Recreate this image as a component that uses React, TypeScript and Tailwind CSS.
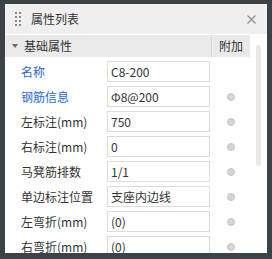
import React from "react";

const rows: { label: string; value: string; blue?: boolean }[] = [
  { label: "名称", value: "C8-200", blue: true },
  { label: "钢筋信息", value: "Φ8@200", blue: true },
  { label: "左标注(mm)", value: "750" },
  { label: "右标注(mm)", value: "0" },
  { label: "马凳筋排数", value: "1/1" },
  { label: "单边标注位置", value: "支座内边线" },
  { label: "左弯折(mm)", value: "(0)" },
  { label: "右弯折(mm)", value: "(0)" },
];

export default function App() {
  return (
    <div
      className="w-[272px] h-[259px] bg-[#3d4148] pt-[4px] px-[5px] pb-[6px] overflow-hidden"
      style={{ fontFamily: '"Noto Sans CJK SC", "Noto Sans", sans-serif' }}
    >
      <div className="relative h-full bg-white flex flex-col overflow-hidden text-[12px] text-[#333]">
        {/* title bar */}
        <div className="h-[30px] shrink-0 bg-[#efefef] flex items-center pl-[10px] pr-[11px]">
          <div className="grid grid-cols-2 gap-x-[2px] gap-y-[2px] w-[6px]">
            {Array.from({ length: 8 }).map((_, i) => (
              <div key={i} className="w-[2px] h-[2px] bg-[#8c8c8c]" />
            ))}
          </div>
          <span className="ml-[10px] leading-none">属性列表</span>
          <div className="flex-1" />
          <svg width="9" height="9" viewBox="0 0 9 9">
            <path d="M0.5 0.5 L8.5 8.5 M8.5 0.5 L0.5 8.5" stroke="#8f8f8f" strokeWidth="1.2" />
          </svg>
        </div>
        <div className="h-[1px] shrink-0 bg-white" />
        {/* group header */}
        <div className="h-[22px] shrink-0 flex">
          <div className="w-[206px] bg-[#eaeaea] flex items-center pl-[7px]">
            <svg width="6" height="4" viewBox="0 0 6 4">
              <path d="M0 0 L6 0 L3 4 Z" fill="#6b6b6b" />
            </svg>
            <span className="ml-[6px] leading-none">基础属性</span>
          </div>
          <div className="w-[39px] bg-[#eaeaea] border-l border-[#d6d6d6] flex items-center justify-center">
            <span className="leading-none">附加</span>
          </div>
          <div className="flex-1" />
        </div>
        {/* rows */}
        <div className="pt-[2px] flex flex-col">
          {rows.map((r) => (
            <div key={r.label} className="h-[25px] flex items-center">
              <div
                className={`w-[102px] pl-[16px] whitespace-nowrap leading-none ${
                  r.blue ? "text-[#1d68d6]" : "text-[#333]"
                }`}
              >
                {r.label}
              </div>
              <div className="w-[103px] h-[21px] border border-[#dcdcdc] flex items-center pl-[3px] leading-none whitespace-nowrap overflow-hidden">
                {r.value}
              </div>
              <div className="w-[41px] flex items-center justify-center">
                {r.label !== "名称" && (
                  <div className="w-[8px] h-[8px] rounded-full bg-[#d6d6d6] border border-[#c4c4c4]" />
                )}
              </div>
            </div>
          ))}
        </div>
        {/* scrollbar */}
        <div className="absolute left-[251px] top-[41px] w-[5px] h-[121px] rounded-full bg-[#e8e8e8]" />
      </div>
    </div>
  );
}
